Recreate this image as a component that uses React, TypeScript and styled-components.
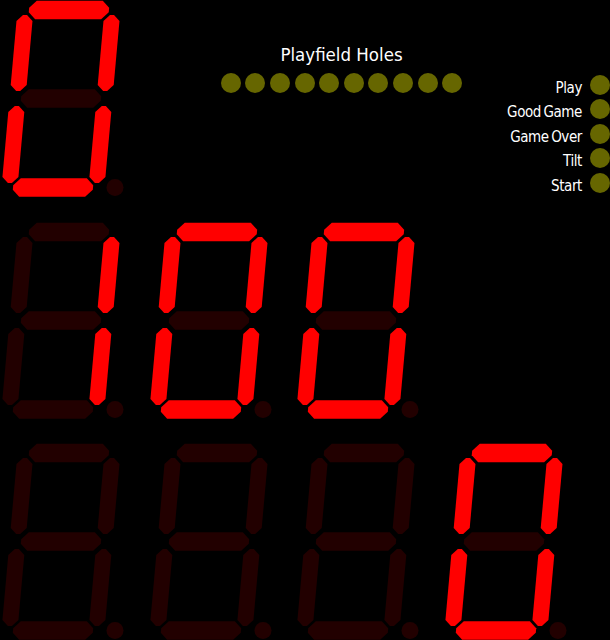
import React from 'react'
import styled, { createGlobalStyle } from 'styled-components'

// seven segment display: a top, b upper right, c lower right, d bottom,
// e lower left, f upper left, g middle
type SegmentName = 'a' | 'b' | 'c' | 'd' | 'e' | 'f' | 'g'

const SEG_ON = '#ff0000'
const SEG_OFF = '#220000'
const LAMP_OFF = '#666600'
const LAMP_ON = '#ffff00'

const PATTERNS: Record<string, SegmentName[]> = {
  '0': ['a', 'b', 'c', 'd', 'e', 'f'],
  '1': ['b', 'c'],
  '2': ['a', 'b', 'g', 'e', 'd'],
  '3': ['a', 'b', 'g', 'c', 'd'],
  '4': ['f', 'g', 'b', 'c'],
  '5': ['a', 'f', 'g', 'c', 'd'],
  '6': ['a', 'f', 'g', 'e', 'c', 'd'],
  '7': ['a', 'b', 'c'],
  '8': ['a', 'b', 'c', 'd', 'e', 'f', 'g'],
  '9': ['a', 'b', 'c', 'd', 'f', 'g'],
  ' ': [],
}

const hSeg = (x0: number, x1: number, yc: number, t = 18.5, c = 7) => {
  const h = t / 2
  return [
    [x0 + c, yc - h], [x1 - c, yc - h], [x1, yc - h + c], [x1, yc + h - c],
    [x1 - c, yc + h], [x0 + c, yc + h], [x0, yc + h - c], [x0, yc - h + c],
  ].map(p => p.join(',')).join(' ')
}

const vSeg = (xc: number, y0: number, y1: number, w = 16, c = 6) => {
  const h = w / 2
  const f = h - c
  return [
    [xc - f, y0], [xc + f, y0], [xc + h, y0 + c], [xc + h, y1 - c],
    [xc + f, y1], [xc - f, y1], [xc - h, y1 - c], [xc - h, y0 + c],
  ].map(p => p.join(',')).join(' ')
}

const SEGMENTS: Record<SegmentName, string> = {
  a: hSeg(21, 101, 10),
  g: hSeg(21, 101, 98.5),
  d: hSeg(21, 101, 187.5),
  f: vSeg(17.5, 15, 91),
  b: vSeg(104.5, 15, 91),
  e: vSeg(17.5, 106, 183),
  c: vSeg(104.5, 106, 183),
}

const GlobalStyle = createGlobalStyle`
  html, body {
    margin: 0;
    padding: 0;
    background: #000;
  }

  body {
    overflow: hidden;
    font-family: "DejaVu Sans Condensed", "DejaVu Sans", sans-serif;
    font-stretch: condensed;
  }
`

const Board = styled.div`
  width: 610px;
  height: 640px;
  display: flex;
  flex-direction: column;
  background: #000;
  overflow: hidden;
`

const DisplayRow = styled.div`
  display: flex;
  flex-shrink: 0;
`

const DigitSvg = styled.svg`
  display: block;
  flex-shrink: 0;
  width: 147.5px;
  height: 221.5px;
`

const Holes = styled.div`
  margin-left: 73px;
  padding-top: 46px;
  width: 242px;
  display: flex;
  flex-direction: column;
  align-items: center;
`

const HolesTitle = styled.div`
  color: #fff;
  font-size: 18.5px;
  line-height: 1;
  margin-bottom: 8.8px;
  white-space: nowrap;
`

const HoleRow = styled.div`
  display: flex;
  gap: 4.67px;
`

const Lamp = styled.div<{ $lit?: boolean }>`
  width: 20px;
  height: 20px;
  flex-shrink: 0;
  border-radius: 50%;
  background: ${p => (p.$lit ? LAMP_ON : LAMP_OFF)};
`

const Indicators = styled.div`
  margin-left: auto;
  padding-top: 74.7px;
  display: flex;
  flex-direction: column;
  gap: 4.6px;
`

const Indicator = styled.div`
  display: flex;
  justify-content: flex-end;
  align-items: flex-start;
  gap: 8px;
  height: 20px;
`

const IndicatorLabel = styled.span`
  color: #fff;
  font-size: 15px;
  line-height: 20px;
  padding-top: 3px;
  letter-spacing: -0.4px;
  word-spacing: -1.5px;
  white-space: nowrap;
`

const Digit: React.FC<{ value: string; dot?: boolean }> = ({ value, dot }) => {
  const lit = PATTERNS[value] || []
  return (
    <DigitSvg viewBox="0 0 147.5 221.5">
      <g transform="translate(0 98.5) skewX(-5.14) translate(0 -98.5)">
        {(Object.keys(SEGMENTS) as SegmentName[]).map(name => (
          <polygon
            key={name}
            points={SEGMENTS[name]}
            fill={lit.includes(name) ? SEG_ON : SEG_OFF}
          />
        ))}
      </g>
      <circle cx={115} cy={187.5} r={8.5} fill={dot ? SEG_ON : SEG_OFF} />
    </DigitSvg>
  )
}

const holes = Array.from({ length: 10 }, (_, i) => ({ id: i, lit: false }))

const indicators = [
  { label: 'Play', lit: false },
  { label: 'Good Game', lit: false },
  { label: 'Game Over', lit: false },
  { label: 'Tilt', lit: false },
  { label: 'Start', lit: false },
]

const App: React.FC = () => {
  return (
    <>
      <GlobalStyle />
      <Board>
        <DisplayRow>
          <Digit value="0" />

          <Holes>
            <HolesTitle>Playfield Holes</HolesTitle>
            <HoleRow>
              {holes.map(h => <Lamp key={h.id} $lit={h.lit} />)}
            </HoleRow>
          </Holes>

          <Indicators>
            {indicators.map(item => (
              <Indicator key={item.label}>
                <IndicatorLabel>{item.label}</IndicatorLabel>
                <Lamp $lit={item.lit} />
              </Indicator>
            ))}
          </Indicators>
        </DisplayRow>

        <DisplayRow>
          {'100'.split('').map((ch, i) => <Digit key={i} value={ch} />)}
        </DisplayRow>

        <DisplayRow>
          {'   0'.split('').map((ch, i) => <Digit key={i} value={ch} />)}
        </DisplayRow>
      </Board>
    </>
  )
}

export default App
